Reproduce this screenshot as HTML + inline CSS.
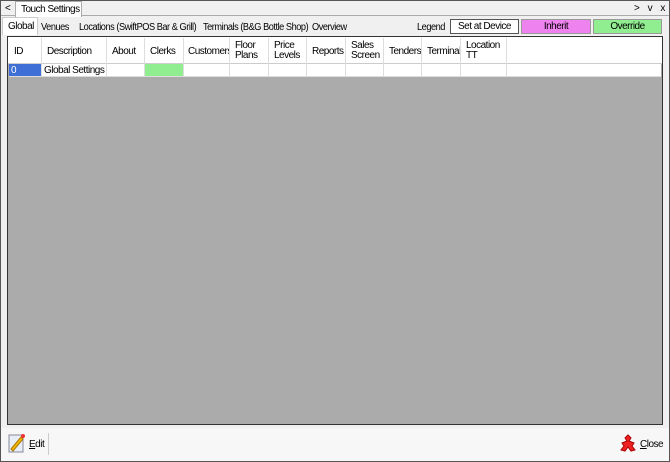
<!DOCTYPE html>
<html><head><style>
*{box-sizing:border-box;margin:0;padding:0}
body{width:670px;height:462px;background:#f0f0f0;font-family:"Liberation Sans",sans-serif;font-size:10px;color:#000;position:relative;overflow:hidden;letter-spacing:-0.5px;white-space:nowrap}
.frame{position:absolute;left:0;top:0;width:670px;height:462px;border:1px solid #555}
.abs{position:absolute}
.sq{transform:scaleX(0.92);transform-origin:left top}
.hdr{position:absolute;top:38px;height:26px;border-right:1px solid #ddd;padding:3px 0 0 5px;line-height:10px;overflow:hidden}
.cell{position:absolute;top:64px;height:13px;border-right:1px solid #ddd;border-bottom:1px solid #ddd;background:#fff;padding:1px 0 0 2px;line-height:11px;overflow:hidden}
</style></head><body>
<div class="frame"></div>
<div class="abs" style="left:1px;top:1px;width:668px;height:15px;background:#f0f0f0;border-bottom:1px solid #aaa"></div>
<div class="abs" style="left:5px;top:3px">&lt;</div>
<div class="abs" style="left:15px;top:1px;width:67px;height:16px;background:#fff;border:1px solid #aaa;border-bottom:none;padding:2px 0 0 5px">Touch Settings</div>
<div class="abs" style="left:634px;top:3px;word-spacing:6px">&gt; v x</div>
<div class="abs" style="left:2px;top:17px;width:36px;height:18px;background:#fff;border:1px solid #ccc;border-bottom:none;padding:3px 0 0 5px">Global</div>
<div class="abs sq" style="left:41px;top:22px">Venues</div>
<div class="abs sq" style="left:79px;top:22px">Locations (SwiftPOS Bar &amp; Grill)</div>
<div class="abs sq" style="left:203px;top:22px">Terminals (B&amp;G Bottle Shop)</div>
<div class="abs sq" style="left:312px;top:22px">Overview</div>
<div class="abs sq" style="left:417px;top:22px">Legend</div>
<div class="abs" style="left:450px;top:19px;width:69px;height:15px;background:#fff;border:1px solid #555;text-align:center;line-height:13px">Set at Device</div>
<div class="abs" style="left:521px;top:19px;width:70px;height:15px;background:#ee82ee;border:1px solid #999;text-align:center;line-height:13px">Inherit</div>
<div class="abs" style="left:593px;top:19px;width:69px;height:15px;background:#90ee90;border:1px solid #999;text-align:center;line-height:13px">Override</div>
<div class="abs" style="left:7px;top:36px;width:656px;height:389px;background:#ababab;border:1px solid #333"></div>
<div class="abs" style="left:8px;top:37px;width:654px;height:27px;background:#fff;border-bottom:1px solid #ccc"></div>
<div class="hdr" style="left:9px;width:33px;padding-top:9px">ID</div>
<div class="hdr" style="left:42px;width:65px;padding-top:9px">Description</div>
<div class="hdr" style="left:107px;width:38px;padding-top:9px">About</div>
<div class="hdr" style="left:145px;width:39px;padding-top:9px">Clerks</div>
<div class="hdr" style="left:184px;width:46px;padding-top:9px;padding-left:4px">Customers</div>
<div class="hdr" style="left:230px;width:39px">Floor<br>Plans</div>
<div class="hdr" style="left:269px;width:38px">Price<br>Levels</div>
<div class="hdr" style="left:307px;width:39px;padding-top:9px">Reports</div>
<div class="hdr" style="left:346px;width:38px">Sales<br>Screen</div>
<div class="hdr" style="left:384px;width:38px;padding-top:9px">Tenders</div>
<div class="hdr" style="left:422px;width:39px;padding-top:9px;padding-left:5px">Terminal</div>
<div class="hdr" style="left:461px;width:46px">Location<br>TT</div>
<div class="cell" style="left:9px;width:33px;background:#3e6fd6;color:#fff">0</div>
<div class="cell" style="left:42px;width:65px">Global Settings</div>
<div class="cell" style="left:107px;width:38px"></div>
<div class="cell" style="left:145px;width:39px;background:#90ee90"></div>
<div class="cell" style="left:184px;width:46px"></div>
<div class="cell" style="left:230px;width:39px"></div>
<div class="cell" style="left:269px;width:38px"></div>
<div class="cell" style="left:307px;width:39px"></div>
<div class="cell" style="left:346px;width:38px"></div>
<div class="cell" style="left:384px;width:38px"></div>
<div class="cell" style="left:422px;width:39px"></div>
<div class="cell" style="left:461px;width:46px"></div>
<div class="cell" style="left:507px;width:154px;border-right:none"></div>
<div class="abs" style="left:1px;top:428px;width:668px;height:33px;background:#f7f7f7"></div>
<svg class="abs" style="left:8px;top:433px" width="18" height="20"><rect x="1" y="2" width="14" height="17" fill="#e8eef5" stroke="#889"/><path d="M3 16 L13 4 L15 6 L5 18 Z" fill="#f5b800" stroke="#a70"/><circle cx="15" cy="3" r="2" fill="#e33"/></svg>
<div class="abs" style="left:29px;top:439px"><u>E</u>dit</div>
<div class="abs" style="top:433px;width:1px;height:22px;background:#ccc;left:48px"></div>
<svg class="abs" style="left:620px;top:434px" width="16" height="18"><path d="M8 1 L11 4 L9 7 L14 9 L12 12 L15 16 L11 17 L8 13 L5 17 L1 16 L4 12 L2 9 L7 7 L5 4 Z" fill="#e22" stroke="#a00"/></svg>
<div class="abs" style="left:640px;top:439px"><u>C</u>lose</div>
</body></html>
